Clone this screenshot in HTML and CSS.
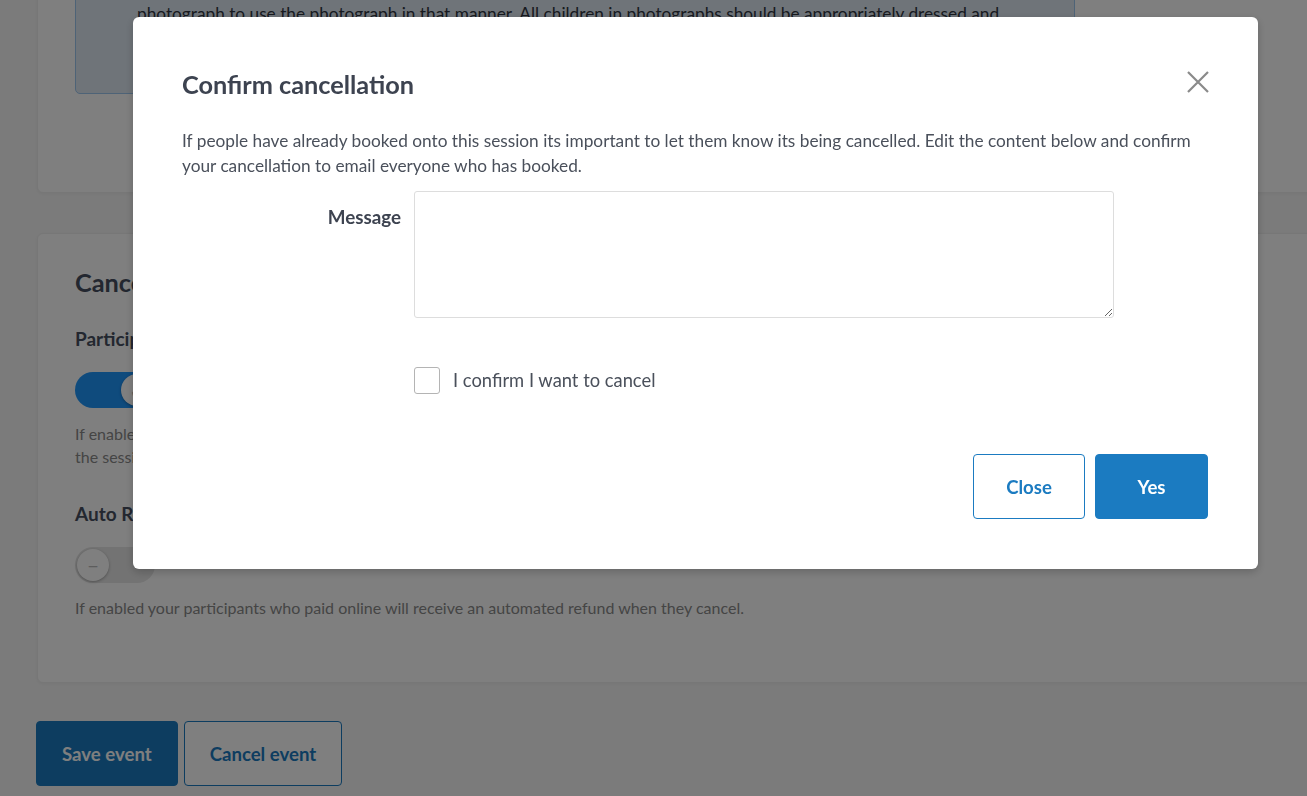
FILE: index.html
```html
<!DOCTYPE html>
<html lang="en">
<head>
<meta charset="utf-8">
<title>Confirm cancellation</title>
<link rel="stylesheet" href="styles.css">
</head>
<body>
<div class="page">
  <section class="card card-top">
    <div class="consent-box">
      <div class="consent-line">By uploading photographs you confirm that you have the permission of every person in the</div>
      <div class="consent-line">photograph, or of the parent or guardian of any child in the photograph, and that you are</div>
      <div class="consent-line">happy for the photograph to be displayed publicly on the event page. You must have the</div>
      <div class="consent-line">written agreement of each person, parent or guardian of each person appearing in the</div>
      <div class="consent-line">photograph to use the photograph in that manner. All children in photographs should be appropriately dressed and</div>
      <div class="consent-line">photographs must not show anything that could be considered inappropriate or offensive.</div>
      <div class="consent-line">Please do not upload photographs containing personal details.</div>
    </div>
  </section>

  <section class="card card-cancel">
    <h2 class="card-title">Cancellation settings</h2>
    <h3 class="field-title">Participant cancellations</h3>
    <div class="toggle toggle-on"><span class="knob">&#10003;</span></div>
    <p class="help help-first">If enabled participants will be able to cancel their own booking any time up until the start of<br>the session and their place will be released.</p>
    <h3 class="field-title field-gap">Auto Refunds</h3>
    <div class="toggle toggle-off"><span class="knob">&#8722;</span></div>
    <p class="help">If enabled your participants who paid online will receive an automated refund when they cancel.</p>
  </section>

  <div class="page-actions">
    <button class="btn btn-primary btn-page">Save event</button>
    <button class="btn btn-outline btn-page">Cancel event</button>
  </div>
</div>

<div class="overlay">
  <div class="modal" role="dialog" aria-labelledby="modal-title">
    <div class="modal-head">
      <h1 id="modal-title" class="modal-title">Confirm cancellation</h1>
      <button class="close-x" aria-label="Close">
        <svg width="22" height="22" viewBox="0 0 22 22"><path d="M1 1 L21 21 M21 1 L1 21" stroke="#8a8a8a" stroke-width="2.2" fill="none"/></svg>
      </button>
    </div>
    <p class="modal-text">If people have already booked onto this session its important to let them know its being cancelled. Edit the content below and confirm your cancellation to email everyone who has booked.</p>
    <div class="form-row">
      <label class="form-label" for="msg">Message</label>
      <textarea id="msg" class="form-textarea"></textarea>
    </div>
    <div class="form-row check-row">
      <span class="form-spacer"></span>
      <label class="check">
        <input type="checkbox" class="check-box">
        <span class="check-text">I confirm I want to cancel</span>
      </label>
    </div>
    <div class="modal-actions">
      <button class="btn btn-outline btn-modal">Close</button>
      <button class="btn btn-primary btn-modal btn-yes">Yes</button>
    </div>
  </div>
</div>
</body>
</html>
```

FILE: styles.css
```css
* { box-sizing: border-box; }

html, body {
  margin: 0;
  padding: 0;
  height: 100%;
  overflow: hidden;
}

body {
  background: #f6f6f6;
  font-family: Lato, "Open Sans", "Liberation Sans", sans-serif;
  color: #3b414d;
}

.page {
  margin-top: -160px;
  padding-left: 37px;
  margin-right: -30px;
}

.card {
  background: #ffffff;
  border-radius: 6px;
  border: 1px solid #eeeeee;
  box-shadow: 0 1px 3px rgba(0, 0, 0, 0.04);
}

.card-top {
  padding: 38px 37px 98px;
}

.consent-box {
  width: 1000px;
  height: 215px;
  overflow: hidden;
  background: #dfe9f3;
  border: 1px solid #9cc6ee;
  border-radius: 5px;
  padding: 21px 61px;
}

.consent-line {
  font-size: 17.25px;
  line-height: 25px;
  white-space: nowrap;
  color: #2f3540;
}

.card-cancel {
  margin-top: 40px;
  padding: 33px 37px 63px;
}

.card-title {
  margin: 0;
  font-size: 25.3px;
  line-height: 30px;
  font-weight: 700;
  color: #474f60;
}

.field-title {
  margin: 28px 0 0;
  font-size: 19px;
  line-height: 28px;
  font-weight: 700;
  color: #474f60;
}

.field-gap { margin-top: 32px; }

.toggle {
  margin-top: 19px;
  width: 80px;
  height: 36px;
  border-radius: 18px;
  display: flex;
  align-items: center;
  padding: 2px;
}

.toggle-on {
  background: #1e96fb;
  justify-content: flex-end;
}

.toggle-off {
  background: #e6e6e6;
  justify-content: flex-start;
}

.knob {
  width: 32px;
  height: 32px;
  border-radius: 50%;
  background: #ffffff;
  box-shadow: 0 1px 3px rgba(0, 0, 0, 0.3);
  display: flex;
  align-items: center;
  justify-content: center;
  font-size: 20px;
  color: #bbbbbb;
}

.help {
  margin: 13px 0 0;
  font-size: 16px;
  line-height: 23px;
  color: #8a8a8a;
}

.help-first { margin-top: 14px; }

.page-actions {
  display: flex;
  gap: 6px;
  margin-top: 38px;
  margin-left: -1px;
}

.btn {
  font-family: Lato, "Open Sans", "Liberation Sans", sans-serif;
  font-weight: 700;
  font-size: 18.6px;
  border-radius: 4px;
  cursor: pointer;
}

.btn-primary {
  background: #1b7bc1;
  color: #ffffff;
  border: 1px solid #1b7bc1;
}

.btn-outline {
  background: #ffffff;
  color: #1b7bc1;
  border: 1px solid #1b7bc1;
}

.btn-page {
  height: 65px;
  padding: 0 25px;
}

.overlay {
  position: fixed;
  inset: 0;
  background: rgba(0, 0, 0, 0.5);
  padding: 17px 49px 0 133px;
}

.modal {
  background: #ffffff;
  border-radius: 6px;
  height: 552px;
  padding: 52px 50px 50px 49px;
  box-shadow: 0 3px 8px rgba(0, 0, 0, 0.2);
}

.modal-head {
  display: flex;
  align-items: center;
  justify-content: space-between;
  height: 30px;
}

.modal-title {
  margin: 0;
  font-size: 25.3px;
  line-height: 30px;
  font-weight: 700;
  color: #3d4350;
}

.close-x {
  background: none;
  border: none;
  padding: 0;
  margin-right: -1px;
  margin-top: -4px;
  display: flex;
  cursor: pointer;
}

.modal-text {
  margin: 29px 0 0;
  font-size: 17.25px;
  line-height: 25px;
  color: #4a505b;
}

.form-row {
  display: grid;
  grid-template-columns: 232px 700px;
  margin-top: 13px;
}

.form-label {
  text-align: right;
  padding-right: 13px;
  padding-top: 13px;
  font-size: 18.8px;
  line-height: 25px;
  font-weight: 700;
  color: #3d4350;
}

.form-textarea {
  display: block;
  width: 700px;
  height: 127px;
  border: 1px solid #dddddd;
  border-radius: 3px;
  font-family: inherit;
  font-size: 17px;
  resize: vertical;
}

.check-row { margin-top: 49px; }

.check {
  display: flex;
  align-items: center;
  gap: 13px;
}

.check-box {
  appearance: none;
  -webkit-appearance: none;
  margin: 0;
  width: 26px;
  height: 27px;
  border: 1px solid #b4b4b4;
  border-radius: 3px;
  background: #ffffff;
}

.check-text {
  font-size: 18.35px;
  line-height: 27px;
  color: #4a505b;
}

.modal-actions {
  display: flex;
  justify-content: flex-end;
  gap: 10px;
  margin-top: 60px;
}

.btn-modal {
  width: 112px;
  height: 65px;
}

.btn-yes { width: 113px; }
```
